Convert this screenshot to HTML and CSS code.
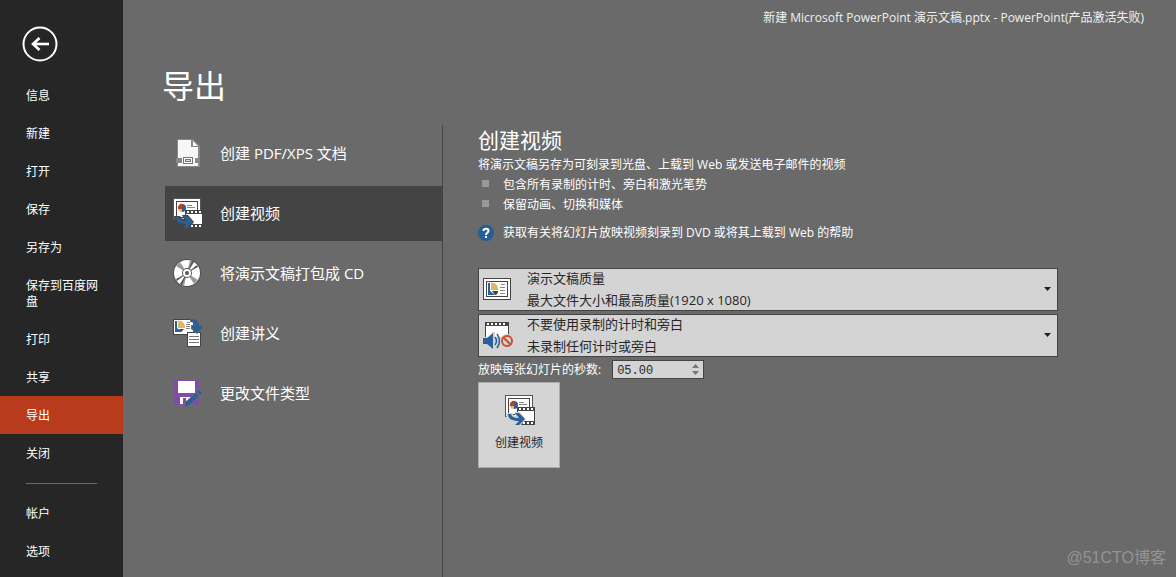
FILE: index.html
```html
<!DOCTYPE html>
<html lang="zh-CN">
<head>
<meta charset="utf-8">
<title>导出 - PowerPoint</title>
<link rel="stylesheet" href="styles.css">
</head>
<body>
<svg class="defs" aria-hidden="true">
  <symbol id="video" viewBox="0 0 32 32">
    <path class="edge" d="M1 1h28v22H1z"/>
    <path fill="#fff" d="M2 2h26v20H2z"/>
    <path fill="#444" d="M4 4h22v17H4z"/>
    <path fill="#fff" d="M5 5h20v15H5z"/>
    <path fill="#2a6099" d="M10 11V7a4 4 0 0 1 0 8z"/>
    <path fill="#e3b565" d="M10 11v4a4 4 0 0 1-4-4z"/>
    <path fill="#c43e1c" d="M10 12H6a4 4 0 0 1 5-5z"/>
    <path fill="#888" d="M15 8h5v1h-5zM15 10h8v1h-8z"/>
    <path fill="#444" d="M13 13h18v18H13z"/>
    <path fill="#fff" d="M14 17h16v10H14zM15 14h2v2h-2zM19 14h2v2h-2zM23 14h2v2h-2zM27 14h2v2h-2zM19 28h2v2h-2zM23 28h2v2h-2zM27 28h2v2h-2z"/>
    <path class="halo" d="M2 19h6c1 2 2 3 4 3l-2-4h6l6 7-6 7H8l3-3C5 28 2 25 2 19z"/>
    <path fill="#2a6099" d="M4 20h3c1 3 3 4 8 4l-4-5h4l6 6-6 6h-4l4-4C8 27 4 25 4 20z"/>
  </symbol>
  <symbol id="slide" viewBox="0 0 30 24">
    <path fill="#444" d="M1 1h28v22H1z"/>
    <path fill="#fff" d="M2 2h26v20H2z"/>
    <path fill="#444" d="M4 4h22v16H4z"/>
    <path fill="#fff" d="M5 5h20v14H5z"/>
    <path fill="#2a6099" d="M6 6h2v8l5 4H6z"/>
    <path fill="#e3b565" d="M9 13V6c4-1 7 2 7 7z"/>
    <path fill="#444" d="M10 14h6c0 2-1 4-3 4z"/>
    <path fill="#888" d="M19 7h4v1h-4zM18 10h5v1h-5zM18 13h5v1h-5zM18 16h5v1h-5z"/>
  </symbol>
</svg>
<div class="app">
  <nav class="side">
    <button class="back" type="button" aria-label="返回">
      <svg viewBox="0 0 36 36" fill="none" stroke="#fff"><circle cx="18" cy="18" r="16.500" stroke-width="2"/><path stroke-width="2.600" d="M11 18h16"/><path stroke-width="2.600" d="M17.500 12l-6.500 6 6.500 6"/></svg>
    </button>
    <a class="item" href="#">信息</a>
    <a class="item" href="#">新建</a>
    <a class="item" href="#">打开</a>
    <a class="item" href="#">保存</a>
    <a class="item" href="#">另存为</a>
    <a class="item" href="#">保存到百度网盘</a>
    <a class="item" href="#">打印</a>
    <a class="item" href="#">共享</a>
    <a class="item current" href="#" aria-current="page">导出</a>
    <a class="item" href="#">关闭</a>
    <hr class="rule">
    <a class="item" href="#">帐户</a>
    <a class="item" href="#">选项</a>
  </nav>
  <main class="main">
    <header class="title">新建 Microsoft PowerPoint 演示文稿.pptx - PowerPoint(产品激活失败)</header>
    <h1 class="heading">导出</h1>
    <div class="columns">
      <div class="kinds">
        <button class="kind" type="button">
          <svg class="icon" viewBox="0 0 32 32"><path fill="#888" d="M5 2h16l7 7v21H5z"/><path fill="#f7f7f7" d="M6 3h13v7h7v19H6z"/><path fill="#f7f7f7" d="M21 4l5 5h-5z"/><path fill="#888" d="M4 21h23v5H4z"/><path fill="#f7f7f7" d="M10 20h13v8H10z"/><path fill="#777" d="M11 20h10v7H11z"/><path fill="#fff" d="M12 21h8v5h-8z"/><path fill="#777" d="M13 22h6v3h-6z"/><path fill="#ddd" d="M14 23h4v1h-4z"/></svg>
          创建 PDF/XPS 文档
        </button>
        <button class="kind selected" type="button"><svg class="icon"><use href="#video"/></svg>创建视频</button>
        <button class="kind" type="button">
          <svg class="icon" viewBox="0 0 32 32"><circle cx="15" cy="16" r="14" fill="#505050"/><circle cx="15" cy="16" r="13" fill="#fff"/><path fill="#999" d="M15 16L4 9l4-4zM15 16l11 7-4 4zM15 16l-3 13-4-2zM15 16l3-13 4 2z"/><path fill="#555" d="M15 16L20 4l2 1zM15 16l10-8 1 2zM15 16L5 24l-1-2zM15 16l-5 12-2-1z"/><circle cx="15" cy="16" r="5" fill="#555"/><circle cx="15" cy="16" r="4" fill="#fff"/><circle cx="15" cy="16" r="2" fill="#555"/></svg>
          将演示文稿打包成 CD
        </button>
        <button class="kind" type="button">
          <svg class="icon" viewBox="0 0 32 32"><path fill="#444" d="M1 2h21v16H1z"/><path fill="#fff" d="M2 3h19v14H2z"/><path fill="#2a6099" d="M3 4h2v7l5 4H3z"/><path fill="#e3b565" d="M6 11V4c4-1 7 2 7 7z"/><path fill="#444" d="M7 12h5l-3 3z"/><path fill="#888" d="M15 5h3v1h-3zM14 7h4v1h-4zM14 9h4v1h-4zM14 11h4v1h-4z"/><path fill="#444" d="M15 15h14v15H15z"/><path fill="#fff" d="M16 16h12v13H16z"/><path fill="#777" d="M17 19h10v1H17zM17 22h10v1H17zM17 25h10v1H17z"/><path fill="#6a6a6a" d="M18 1c8 0 10 3 10 8h3v3l-6 5-6-5V8h3c0-2-1-3-4-3z"/><path fill="#2a6099" d="M19 2c6 0 8 3 8 7l3-1v3l-5 5-5-5V8l3 2c0-4-1-5-4-5z"/></svg>
          创建讲义
        </button>
        <button class="kind" type="button">
          <svg class="icon" viewBox="0 0 32 32"><path fill="#7f4da3" d="M2 3h25v25H4l-2-2z"/><path fill="#fff" d="M6 4h17v12H6zM8 20h12v7H8z"/><path fill="#7f4da3" d="M11 21h3v6h-3z"/><path fill="#6a6a6a" d="M12 31l1-6 14-12 4 3-13 13z"/><path fill="#2a6099" d="M13 30l1-5 10-9 3 3-10 9zM25 15l2-2 3 3-2 2z"/></svg>
          更改文件类型
        </button>
      </div>
      <section class="panel">
        <h2 class="subhead">创建视频</h2>
        <p class="lead">将演示文稿另存为可刻录到光盘、上载到 Web 或发送电子邮件的视频</p>
        <ul class="points">
          <li>包含所有录制的计时、旁白和激光笔势</li>
          <li>保留动画、切换和媒体</li>
        </ul>
        <a class="help" href="#"><svg viewBox="0 0 16 16"><circle cx="8" cy="8" r="8" fill="#255d96"/><path fill="none" stroke="#fff" stroke-width="2" d="M5.500 6C5.500 3 10.500 3 10.500 6 10.500 7.500 8 7.500 8 10"/><path fill="#fff" d="M7 11h2v2H7z"/></svg>获取有关将幻灯片放映视频刻录到 DVD 或将其上载到 Web 的帮助</a>
        <div class="choice">
          <select id="quality"><option>最大文件大小和最高质量(1920 x 1080)</option></select>
          <svg class="mark slide"><use href="#slide"/></svg>
          <label for="quality">演示文稿质量</label>
          <svg class="caret" viewBox="0 0 7 4"><path fill="#222" d="M0 0h7L3.500 4z"/></svg>
        </div>
        <div class="choice">
          <select id="timing"><option>未录制任何计时或旁白</option></select>
          <svg class="mark" viewBox="0 0 32 32"><path fill="#444" d="M3 3h24v15H3z"/><path fill="#fff" d="M4 7h22v14H4zM5 4h2v2H5zM9 4h2v2H9zM13 4h2v2h-2zM17 4h2v2h-2zM21 4h2v2h-2z"/><path fill="#d4d4d4" d="M3 18h24v3H3zM10 13h3v18h-3z"/><path fill="#2a6099" d="M1 19h4l6-5v16l-6-5H1z"/><path fill="none" stroke="#2a6099" stroke-width="1.500" d="M13 18q3 4 0 8M15 15q5 7 0 14"/><circle cx="25" cy="22" r="7" fill="#d4d4d4"/><circle cx="25" cy="22" r="5" fill="none" stroke="#c94f2f" stroke-width="2"/><path stroke="#c94f2f" stroke-width="2" d="M21.500 18.500l7 7"/></svg>
          <label for="timing">不要使用录制的计时和旁白</label>
          <svg class="caret" viewBox="0 0 7 4"><path fill="#222" d="M0 0h7L3.500 4z"/></svg>
        </div>
        <div class="seconds">
          <label for="secs">放映每张幻灯片的秒数:</label>
          <span class="spin">
            <input id="secs" type="text" value="05.00">
            <span class="steps">
              <button type="button" aria-label="增加"><svg viewBox="0 0 7 4"><path fill="#777" d="M0 4h7L3.500 0z"/></svg></button>
              <button type="button" aria-label="减少"><svg viewBox="0 0 7 4"><path fill="#777" d="M0 0h7L3.500 4z"/></svg></button>
            </span>
          </span>
        </div>
        <button class="create" type="button"><svg class="icon"><use href="#video"/></svg>创建视频</button>
      </section>
    </div>
  </main>
  <div class="watermark">@51CTO博客</div>
</div>
</body>
</html>
```
FILE: styles.css
```css
* { box-sizing: border-box; }
body {
  margin: 0;
  background: #6a6a6a;
  color: #fff;
  font: 12px/16px "Open Sans", "Noto Sans CJK SC", sans-serif;
}
button, input, select { font: inherit; color: inherit; margin: 0; }
h1, h2, p, ul { margin: 0; padding: 0; font-weight: 400; }
a { color: inherit; text-decoration: none; }
svg { display: block; flex: none; }
.defs { position: absolute; width: 0; height: 0; }
.app { display: flex; min-height: 100vh; position: relative; }

.side { width: 123px; flex: none; background: #262626; padding-top: 26px; }
.back {
  display: block;
  width: 36px;
  height: 36px;
  margin: 0 0 14px 22px;
  padding: 0;
  border: 0;
  background: none;
}
.item { display: block; padding: 12px 24px 10px 26px; }
.current { background: #b83b1d; }
.rule { margin: 11px 26px 10px; border: 0; border-top: 1px solid #6a6a6a; }

.main { flex: 1; min-width: 0; display: flex; flex-direction: column; padding-left: 42px; }
.title { padding: 10px 32px 0 0; text-align: right; color: #f0f0f0; }
.heading { margin: 39px 0 19px -3px; font-size: 32px; line-height: 41px; }
.columns { display: flex; flex: 1; }
.kinds {
  width: 278px;
  flex: none;
  display: flex;
  flex-direction: column;
  gap: 5px;
  padding-top: 1px;
  border-right: 1px solid #444;
}
.kind {
  display: flex;
  align-items: center;
  gap: 16px;
  height: 55px;
  padding: 0 7px 2px;
  border: 0;
  background: none;
  font-size: 15px;
  line-height: 20px;
  text-align: left;
}
.selected { background: #444; }
.icon { width: 32px; height: 32px; }
.edge { fill: #555; }
.halo { fill: var(--halo, #444); }

.panel { flex: 1; min-width: 0; padding: 1px 118px 0 35px; }
.subhead { margin-bottom: 2px; font-size: 21px; line-height: 28px; }
.points { list-style: none; margin-top: 1px; }
.lead { line-height: 18px; }
.points li { display: flex; align-items: center; height: 20px; }
.points li::before { content: ""; width: 7px; height: 7px; margin: 0 14px 3px 4px; background: #999; }
.help { display: flex; align-items: center; gap: 9px; margin: 10px 0 27px; }
.help svg { width: 16px; height: 16px; }

.choice {
  display: grid;
  height: 43px;
  margin-bottom: 3px;
  color: #262626;
  font-size: 13px;
}
.choice > * { grid-area: 1 / 1; pointer-events: none; }
.choice > select {
  width: 100%;
  appearance: none;
  pointer-events: auto;
  padding: 20px 24px 0 48px;
  border: 1px solid #444;
  border-radius: 0;
  background: #d4d4d4;
}
.choice label { padding: 2px 0 0 49px; }
.mark { width: 32px; height: 32px; margin: 5px 0 0 4px; }
.slide { width: 30px; height: 24px; margin-top: 9px; }
.caret { width: 7px; height: 4px; place-self: center end; margin: 0 7px 2px 0; }

.seconds { display: flex; align-items: center; gap: 11px; }
.spin { display: flex; width: 92px; height: 19px; border: 1px solid #444; background: #d4d4d4; color: #262626; }
.spin input {
  flex: 1;
  min-width: 0;
  padding: 2px 0 0 4px;
  border: 0;
  background: none;
  font: 12px/14px "Liberation Mono", monospace;
}
.steps { display: flex; flex-direction: column; justify-content: space-evenly; padding-right: 4px; }
.steps button { padding: 0; border: 0; background: none; }
.steps svg { width: 7px; height: 4px; }
.create {
  --halo: #d4d4d4;
  display: flex;
  flex-direction: column;
  align-items: center;
  gap: 9px;
  width: 82px;
  height: 86px;
  margin-top: 3px;
  padding: 11px 0 0;
  border: 1px solid #ababab;
  background: #d4d4d4;
  color: #262626;
}
.create .icon { margin-left: 2px; }
.watermark {
  position: absolute;
  right: 10px;
  bottom: 7px;
  color: #949494;
  font: 16px/24px "Liberation Sans", "Noto Sans CJK SC", sans-serif;
}
```
